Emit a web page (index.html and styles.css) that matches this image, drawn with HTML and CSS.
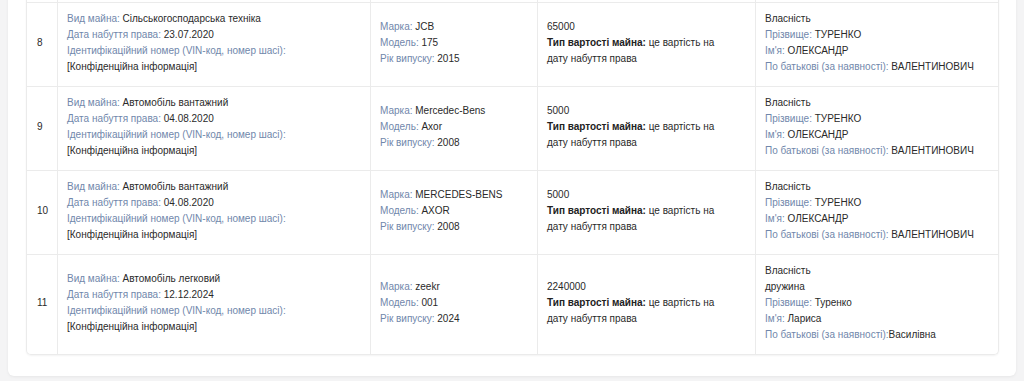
FILE: index.html
```html
<!DOCTYPE html>
<html lang="uk">
<head>
<meta charset="utf-8">
<title>Транспортні засоби</title>
<link rel="stylesheet" href="styles.css">
</head>
<body>
<div class="card">
  <table class="grid">
    <colgroup>
      <col class="c-num"><col class="c-kind"><col class="c-model"><col class="c-cost"><col class="c-owner">
    </colgroup>
    <tbody>
      <tr class="prev">
        <td></td><td></td><td></td><td></td><td></td>
      </tr>
      <tr>
        <td>8</td>
        <td><div><span class="lbl">Вид майна:</span> Сільськогосподарська техніка</div><div><span class="lbl">Дата набуття права:</span> 23.07.2020</div><div class="lbl">Ідентифікаційний номер (VIN-код, номер шасі):</div><div>[Конфіденційна інформація]</div></td>
        <td><div><span class="lbl">Марка:</span> JCB</div><div><span class="lbl">Модель:</span> 175</div><div><span class="lbl">Рік випуску:</span> 2015</div></td>
        <td><div>65000</div><div class="cost"><b>Тип вартості майна:</b> це вартість на дату набуття права</div></td>
        <td><div>Власність</div><div><span class="lbl">Прізвище:</span> ТУРЕНКО</div><div><span class="lbl">Ім'я:</span> ОЛЕКСАНДР</div><div><span class="lbl">По батькові (за наявності):</span> ВАЛЕНТИНОВИЧ</div></td>
      </tr>
      <tr>
        <td>9</td>
        <td><div><span class="lbl">Вид майна:</span> Автомобіль вантажний</div><div><span class="lbl">Дата набуття права:</span> 04.08.2020</div><div class="lbl">Ідентифікаційний номер (VIN-код, номер шасі):</div><div>[Конфіденційна інформація]</div></td>
        <td><div><span class="lbl">Марка:</span> Mercedec-Bens</div><div><span class="lbl">Модель:</span> Axor</div><div><span class="lbl">Рік випуску:</span> 2008</div></td>
        <td><div>5000</div><div class="cost"><b>Тип вартості майна:</b> це вартість на дату набуття права</div></td>
        <td><div>Власність</div><div><span class="lbl">Прізвище:</span> ТУРЕНКО</div><div><span class="lbl">Ім'я:</span> ОЛЕКСАНДР</div><div><span class="lbl">По батькові (за наявності):</span> ВАЛЕНТИНОВИЧ</div></td>
      </tr>
      <tr>
        <td>10</td>
        <td><div><span class="lbl">Вид майна:</span> Автомобіль вантажний</div><div><span class="lbl">Дата набуття права:</span> 04.08.2020</div><div class="lbl">Ідентифікаційний номер (VIN-код, номер шасі):</div><div>[Конфіденційна інформація]</div></td>
        <td><div><span class="lbl">Марка:</span> MERCEDES-BENS</div><div><span class="lbl">Модель:</span> AXOR</div><div><span class="lbl">Рік випуску:</span> 2008</div></td>
        <td><div>5000</div><div class="cost"><b>Тип вартості майна:</b> це вартість на дату набуття права</div></td>
        <td><div>Власність</div><div><span class="lbl">Прізвище:</span> ТУРЕНКО</div><div><span class="lbl">Ім'я:</span> ОЛЕКСАНДР</div><div><span class="lbl">По батькові (за наявності):</span> ВАЛЕНТИНОВИЧ</div></td>
      </tr>
      <tr>
        <td>11</td>
        <td><div><span class="lbl">Вид майна:</span> Автомобіль легковий</div><div><span class="lbl">Дата набуття права:</span> 12.12.2024</div><div class="lbl">Ідентифікаційний номер (VIN-код, номер шасі):</div><div>[Конфіденційна інформація]</div></td>
        <td><div><span class="lbl">Марка:</span> zeekr</div><div><span class="lbl">Модель:</span> 001</div><div><span class="lbl">Рік випуску:</span> 2024</div></td>
        <td><div>2240000</div><div class="cost"><b>Тип вартості майна:</b> це вартість на дату набуття права</div></td>
        <td><div>Власність</div><div>дружина</div><div><span class="lbl">Прізвище:</span> Туренко</div><div><span class="lbl">Ім'я:</span> Лариса</div><div><span class="lbl">По батькові (за наявності):</span>Василівна</div></td>
      </tr>
    </tbody>
  </table>
</div>
</body>
</html>
```

FILE: styles.css
```css
html, body {
  margin: 0;
  padding: 0;
  background: #f4f4f5;
}
body {
  padding: 0 8px;
  font-family: "Liberation Sans", Arial, Helvetica, sans-serif;
  font-size: 10px;
  line-height: 16px;
  color: #2a2a2a;
  overflow: hidden;
  height: 381px;
}
.card {
  margin-top: -81px;
  background: #fff;
  border-radius: 0 0 6px 6px;
  padding: 0 17px 21px 18px;
  box-shadow: 0 1px 3px rgba(0, 0, 0, 0.06);
}
.grid {
  width: 100%;
  table-layout: fixed;
  border-collapse: separate;
  border-spacing: 0;
  border: 1px solid #ebebeb;
  border-top: none;
  border-radius: 0 0 5px 5px;
  box-shadow: 0 1px 2px rgba(0, 0, 0, 0.05);
}
.c-num { width: 30px; }
.c-kind { width: 313px; }
.c-model { width: 167px; }
.c-cost { width: 218px; }
.c-owner { width: auto; }
.grid td {
  vertical-align: middle;
  padding: 8px 9px 11px 9px;
  border-top: 1px solid #ebebeb;
  border-left: 1px solid #ebebeb;
}
.grid td:first-child {
  border-left: none;
  padding-left: 10px;
}
.grid tr.prev td {
  border-top: none;
  height: 64px;
}
.lbl {
  color: #7187ab;
}
.cost {
  padding-right: 18px;
}
.cost b {
  font-weight: 700;
  color: #222;
}
```
